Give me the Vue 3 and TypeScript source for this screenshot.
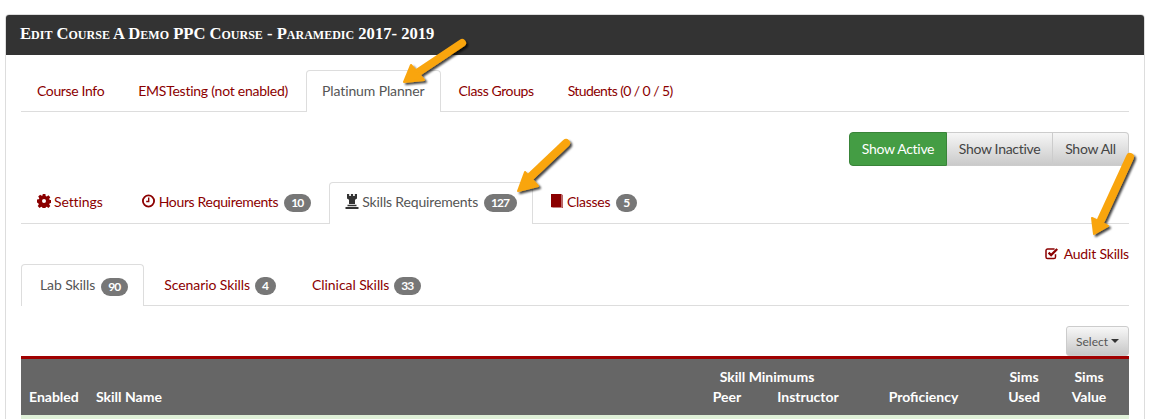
<script setup lang="ts">
interface Tab { label: string; count?: number; icon?: string; active?: boolean; track: number }
const mainTabs: Tab[] = [
  { label: 'Course Info', track: -0.36 },
  { label: 'EMSTesting (not enabled)', track: -0.25 },
  { label: 'Platinum Planner', active: true, track: -0.12 },
  { label: 'Class Groups', track: -0.4 },
  { label: 'Students (0 / 0 / 5)', track: -0.58 },
]
const plannerTabs: Tab[] = [
  { label: 'Settings', icon: 'cog', track: -0.1 },
  { label: 'Hours Requirements', icon: 'clock', count: 10, track: -0.33 },
  { label: 'Skills Requirements', icon: 'tower', count: 127, active: true, track: -0.16 },
  { label: 'Classes', icon: 'book', count: 5, track: -0.3 },
]
const skillTabs: Tab[] = [
  { label: 'Lab Skills', count: 90, active: true, track: -0.1 },
  { label: 'Scenario Skills', count: 4, track: -0.07 },
  { label: 'Clinical Skills', count: 33, track: -0.07 },
]
const track = (t: Tab) => ({ letterSpacing: `${t.track}px` })
</script>

<template>
  <div class="page">
    <section class="panel">
      <h1 class="panel-head">Edit Course A Demo PPC Course - Paramedic 2017- 2019</h1>
      <div class="panel-body">
        <ul class="tabs">
          <li v-for="t in mainTabs" :key="t.label" class="tab" :class="{ active: t.active }">
            <span :style="track(t)">{{ t.label }}</span>
          </li>
        </ul>

        <div class="toolbar">
          <div class="btn-group">
            <span class="btn on">Show Active</span>
            <span class="btn">Show Inactive</span>
            <span class="btn">Show All</span>
          </div>
        </div>

        <ul class="tabs planner">
          <li v-for="t in plannerTabs" :key="t.label" class="tab" :class="{ active: t.active }">
            <svg v-if="t.icon === 'cog'" class="ico" width="14" height="14" viewBox="0 0 14 14">
              <path fill-rule="evenodd" d="M5.6 0h2.8l.3 1.9 1.1.5 1.6-1.1 1.9 1.9-1.1 1.6.5 1.1 1.8.3v2.8l-1.8.3-.5 1.1 1.1 1.6-1.9 1.9-1.6-1.1-1.1.5-.3 1.8H5.6l-.3-1.8-1.1-.5-1.6 1.1-1.9-1.9 1.1-1.6-.5-1.1L0 8.4V5.6l1.8-.3.5-1.1-1.1-1.6 1.9-1.9 1.6 1.1 1.1-.5zM7 5a2 2 0 1 0 0 4 2 2 0 0 0 0-4z" />
            </svg>
            <svg v-else-if="t.icon === 'clock'" class="ico clock" width="13" height="14" viewBox="0 0 13 14">
              <circle cx="6.5" cy="7" r="5.6" fill="none" stroke="currentColor" stroke-width="1.8" />
              <path d="M6.7 3.6v3.9H4.2" fill="none" stroke="currentColor" stroke-width="1.4" />
            </svg>
            <svg v-else-if="t.icon === 'tower'" class="ico tower" width="14" height="15" viewBox="0 0 14 15">
              <path d="M2 0h2.2v2h1.7V0h2.2v2h1.7V0H12v4.5l-2 1.2V10H4V5.7L2 4.5zM2.5 10.8h9v1.5h-9zM.5 13h13v2H.5z" />
            </svg>
            <svg v-else-if="t.icon === 'book'" class="ico book" width="12" height="14" viewBox="0 0 12 14">
              <path d="M0 0h10.6v13.2H0z" /><path d="M11.2.8h.8V14H1.4v-.4h9.8z" opacity=".75" />
            </svg>
            <span :style="track(t)">{{ t.label }}</span>
            <b v-if="t.count !== undefined" class="badge">{{ t.count }}</b>
          </li>
        </ul>

        <div class="audit">
          <svg class="ico" width="14" height="13" viewBox="0 0 14 13">
            <path d="M10.5 7.2V10a1.6 1.6 0 0 1-1.6 1.6H2.6A1.6 1.6 0 0 1 1 10V3.6A1.6 1.6 0 0 1 2.6 2h7" fill="none" stroke="currentColor" stroke-width="1.5" />
            <path d="M3.6 5.6l2.5 2.5L12.2 2" fill="none" stroke="currentColor" stroke-width="2.3" />
          </svg>
          <span>Audit Skills</span>
        </div>

        <ul class="tabs skills">
          <li v-for="t in skillTabs" :key="t.label" class="tab" :class="{ active: t.active }">
            <span :style="track(t)">{{ t.label }}</span>
            <b class="badge">{{ t.count }}</b>
          </li>
        </ul>

        <div class="select-row">
          <span class="select-btn">Select<i class="caret"></i></span>
        </div>

        <div class="thead">
          <div class="th left c-enabled">Enabled</div>
          <div class="th left c-name">Skill Name</div>
          <div class="th c-mins">Skill Minimums</div>
          <div class="th c-peer">Peer</div>
          <div class="th c-instr">Instructor</div>
          <div class="th c-prof">Proficiency</div>
          <div class="th c-used top">Sims</div>
          <div class="th c-used">Used</div>
          <div class="th c-value top">Sims</div>
          <div class="th c-value">Value</div>
        </div>
        <div class="row-strip"></div>
      </div>
    </section>

    <svg class="arrows" width="1154" height="419" viewBox="0 0 1154 419">
      <defs>
        <filter id="arrow-shadow" x="-30%" y="-30%" width="160%" height="160%">
          <feDropShadow dx="2" dy="2" stdDeviation="1.2" flood-color="#000" flood-opacity="0.75" />
        </filter>
      </defs>
      <g filter="url(#arrow-shadow)" fill="#f9a50e" stroke="#f9a50e" stroke-linejoin="round" stroke-linecap="round">
        <path d="M462 43 L417 73" fill="none" stroke-width="8" />
        <path d="M404 82 L411 65 L424 80 Z" stroke-width="2" />
        <path d="M566 143 L528 179" fill="none" stroke-width="8" />
        <path d="M518 191 L525 172 L538 186 Z" stroke-width="2" />
        <path d="M1130 157 L1101 220" fill="none" stroke-width="8" />
        <path d="M1094 234 L1092 218 L1108 226 Z" stroke-width="2" />
      </g>
    </svg>
  </div>
</template>

<style>
html, body { margin: 0; background: #fff; }
</style>

<style scoped>
.page {
  position: relative;
  width: 1154px;
  height: 419px;
  overflow: hidden;
  padding: 14px 9px 0 5px;
  box-sizing: border-box;
  font-family: Lato, "Noto Sans", sans-serif;
  font-size: 14px;
  color: #555;
}
.panel {
  border: 1px solid #ddd;
  border-radius: 4px 4px 0 0;
  height: 420px;
  box-sizing: border-box;
}
.panel-head {
  margin: 0;
  height: 40px;
  line-height: 37px;
  padding-left: 14px;
  background: #333;
  color: #fff;
  border-radius: 3px 3px 0 0;
  font-family: "Liberation Serif", serif;
  font-variant: small-caps;
  font-weight: 700;
  font-size: 16.6px;
}
.panel-body { padding: 15px 15px 0; }
.tabs {
  list-style: none;
  margin: 0;
  padding: 0;
  display: flex;
  height: 41px;
  border-bottom: 1px solid #ddd;
}
.tab {
  display: flex;
  align-items: center;
  gap: 3px;
  height: 41px;
  padding: 0 15px 2px;
  margin-right: 2px;
  box-sizing: border-box;
  color: #8b0000;
  white-space: nowrap;
  border: 1px solid transparent;
  border-bottom: 0;
  border-radius: 4px 4px 0 0;
}
.tab.active {
  color: #555;
  background: #fff;
  border-color: #ddd;
  height: 42px;
}
.toolbar { display: flex; justify-content: flex-end; margin-top: 20px; }
.btn-group { display: flex; height: 34px; }
.btn {
  display: flex;
  align-items: center;
  justify-content: center;
  box-sizing: border-box;
  width: 106px;
  padding-bottom: 2px;
  letter-spacing: -0.3px;
  color: #444;
  background: linear-gradient(#f6f6f6, #cacaca);
  border: 1px solid #ccc;
  border-left: 0;
}
.btn.on {
  width: 98px;
  color: #fff;
  background: #449d44;
  border: 1px solid #398439;
  border-radius: 4px 0 0 4px;
}
.btn:last-child { width: 76px; border-radius: 0 4px 4px 0; }
.planner { margin-top: 16px; }
.planner .tab { padding-bottom: 4px; }
.planner .tab.active { padding-bottom: 5px; }
.planner .tab:first-child { padding-right: 20px; }
.ico { fill: currentColor; flex: none; }
.clock { margin-right: 1px; }
.book { margin-right: 1px; }
.tower { color: #333; }
.badge {
  display: block;
  padding: 0 8px 0 7px;
  height: 18px;
  line-height: 18px;
  border-radius: 10px;
  background: #777;
  color: #fff;
  font-size: 12px;
  letter-spacing: -0.96px;
  text-align: center;
  margin: 4px 0 0 3px;
}
.audit {
  display: flex;
  justify-content: flex-end;
  align-items: center;
  gap: 5px;
  height: 20px;
  margin-top: 20px;
  padding-bottom: 2px;
  box-sizing: border-box;
  letter-spacing: -0.18px;
  color: #8b0000;
}
.skills { margin-top: 0; }
.skills .tab { gap: 2px; padding-left: 17px; }
.skills .tab:first-child { gap: 3px; padding-left: 18px; }
.select-row { display: flex; justify-content: flex-end; margin-top: 20px; }
.select-btn {
  display: flex;
  align-items: center;
  justify-content: center;
  gap: 3px;
  width: 63px;
  height: 30px;
  box-sizing: border-box;
  font-size: 12px;
  color: #555;
  background: linear-gradient(#f8f8f8, #c6c6c6);
  border: 1px solid #ccc;
  border-radius: 3px;
}
.caret {
  width: 0;
  height: 0;
  border-left: 4px solid transparent;
  border-right: 4px solid transparent;
  border-top: 4px solid #333;
}
.thead {
  display: grid;
  grid-template-columns: 67px 598px 82px 80px 151px 50px 80px;
  grid-template-rows: 20px 20px;
  align-content: start;
  height: 59px;
  box-sizing: border-box;
  padding-top: 8px;
  background: #666;
  border-top: 3px solid #a00000;
  color: #fff;
  font-weight: 700;
  font-size: 14px;
}
.th { text-align: center; line-height: 20px; grid-row: 2; }
.th.top { grid-row: 1; }
.th.left { text-align: left; padding-left: 8px; white-space: nowrap; }
.c-enabled { grid-column: 1; }
.c-name { grid-column: 2; }
.c-mins { grid-column: 3 / span 2; grid-row: 1; }
.c-peer { grid-column: 3; }
.c-instr { grid-column: 4; }
.c-prof { grid-column: 5; }
.c-used { grid-column: 6; }
.c-value { grid-column: 7; }
.row-strip { height: 20px; background: #dff0d8; }
.arrows { position: absolute; left: 0; top: 0; pointer-events: none; }
</style>
